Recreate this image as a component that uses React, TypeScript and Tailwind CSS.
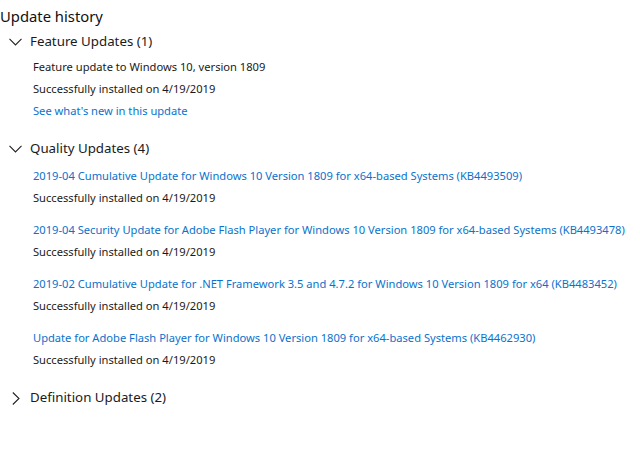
import React from "react";

const quality: string[] = [
  "2019-04 Cumulative Update for Windows 10 Version 1809 for x64-based Systems (KB4493509)",
  "2019-04 Security Update for Adobe Flash Player for Windows 10 Version 1809 for x64-based Systems (KB4493478)",
  "2019-02 Cumulative Update for .NET Framework 3.5 and 4.7.2 for Windows 10 Version 1809 for x64 (KB4483452)",
  "Update for Adobe Flash Player for Windows 10 Version 1809 for x64-based Systems (KB4462930)",
];

function Chevron({ open }: { open: boolean }) {
  return (
    <span className="w-[13px] h-[13px] flex items-center justify-center shrink-0">
      {open ? (
        <svg width="13" height="8" viewBox="0 0 13 8">
          <path d="M0.5 0.8 L6.5 7 L12.5 0.8" fill="none" stroke="#222" strokeWidth="1.1" />
        </svg>
      ) : (
        <svg width="8" height="13" viewBox="0 0 8 13">
          <path d="M0.8 0.5 L7 6.5 L0.8 12.5" fill="none" stroke="#222" strokeWidth="1.1" />
        </svg>
      )}
    </span>
  );
}

function Header({ label, open }: { label: string; open: boolean }) {
  return (
    <div className="flex items-center gap-[8px] pl-[9px] h-[24px] text-[13.3px] text-[#1a1a1a]">
      <Chevron open={open} />
      <span>{label}</span>
    </div>
  );
}

export default function App() {
  return (
    <div
      className="w-[640px] h-[452px] bg-white overflow-hidden"
      style={{ fontFamily: '"Noto Sans", "Open Sans", sans-serif' }}
    >
      <div className="text-[14.8px] leading-[22px] text-[#111] pt-[5px]">Update history</div>

      <div className="mt-[3px]">
        <Header label="Feature Updates (1)" open />
        <div className="pl-[33px] text-[11.15px] leading-[22px] pt-[2px]">
          <div className="text-[#1a1a1a] whitespace-nowrap">Feature update to Windows 10, version 1809</div>
          <div className="text-[#1a1a1a]">Successfully installed on 4/19/2019</div>
          <div className="text-[#0a72cc]">See what's new in this update</div>
        </div>
      </div>

      <div className="mt-[15px]">
        <Header label="Quality Updates (4)" open />
        <div className="pl-[33px] text-[11.15px] leading-[22px] pt-[4px] flex flex-col gap-[10px]">
          {quality.map((q) => (
            <div key={q}>
              <div className="text-[#0a72cc] whitespace-nowrap">{q}</div>
              <div className="text-[#1a1a1a]">Successfully installed on 4/19/2019</div>
            </div>
          ))}
        </div>
      </div>

      <div className="mt-[15px]">
        <Header label="Definition Updates (2)" open={false} />
      </div>
    </div>
  );
}
